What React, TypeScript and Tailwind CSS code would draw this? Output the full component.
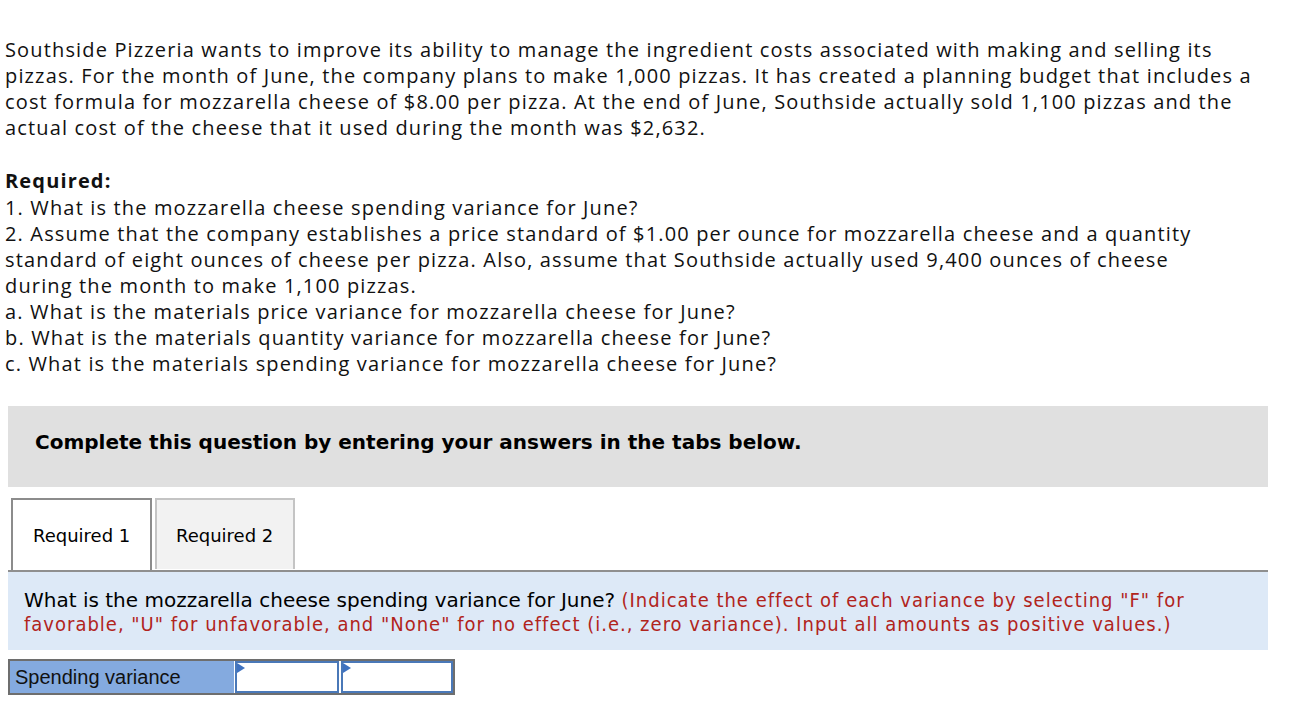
export default function App() {
  return (
    <div className="min-h-screen bg-white pt-[37px]">
      {/* problem text */}
      <div className="whitespace-nowrap pl-[5px] text-[20px] leading-[26px] tracking-[1.15px] text-[#111]" style={{ fontFamily: '"Open Sans", Arial, sans-serif' }}>
        <p>
          Southside Pizzeria wants to improve its ability to manage the ingredient costs associated with making and selling its<br />
          pizzas. For the month of June, the company plans to make 1,000 pizzas. It has created a planning budget that includes a<br />
          cost formula for mozzarella cheese of $8.00 per pizza. At the end of June, Southside actually sold 1,100 pizzas and the<br />
          actual cost of the cheese that it used during the month was $2,632.
        </p>
        <p className="mt-[27px] font-bold">Required:</p>
        <p className="mt-[1px]">1. What is the mozzarella cheese spending variance for June?</p>
        <p>
          2. Assume that the company establishes a price standard of $1.00 per ounce for mozzarella cheese and a quantity<br />
          standard of eight ounces of cheese per pizza. Also, assume that Southside actually used 9,400 ounces of cheese<br />
          during the month to make 1,100 pizzas.
        </p>
        <p>a. What is the materials price variance for mozzarella cheese for June?</p>
        <p>b. What is the materials quantity variance for mozzarella cheese for June?</p>
        <p>c. What is the materials spending variance for mozzarella cheese for June?</p>
      </div>

      <div className="mx-[8px] w-[1260px]" style={{ fontFamily: '"DejaVu Sans", Verdana, sans-serif' }}>
        {/* instructions bar */}
        <div className="mt-[29px] h-[81px] bg-[#e0e0e0] pl-[27px] pt-[21px] text-[20px] font-bold text-black">
          Complete this question by entering your answers in the tabs below.
        </div>

        {/* tabs */}
        <div className="mt-[11px] flex gap-[3px] pl-[3px]">
          <div className="flex h-[72px] w-[141px] items-center border-2 border-b-0 border-[#8c8c8c] bg-white pl-[20px] text-[18px] text-black">
            Required 1
          </div>
          <div className="flex h-[71px] w-[140px] items-center border-2 border-b-0 border-[#c4c4c4] bg-[#f2f2f2] pl-[19px] pt-[2px] text-[18px] text-black">
            Required 2
          </div>
        </div>

        {/* question panel */}
        <div className="whitespace-nowrap border-t-2 border-[#8f8f8f] bg-[#dde9f7] pl-[16px] pt-[16px] pb-[14px] text-[20px] leading-[24px] text-black">
          What is the mozzarella cheese spending variance for June?{" "}
          <span className="tracking-[1px] text-[#b1241c]" style={{ fontFamily: '"DejaVu Sans Condensed", "DejaVu Sans", sans-serif', fontStretch: 'condensed' }}>
            (Indicate the effect of each variance by selecting "F" for<br />
            favorable, "U" for unfavorable, and "None" for no effect (i.e., zero variance). Input all amounts as positive values.)
          </span>
        </div>

        {/* answer row */}
        <div className="mt-[9px] flex h-[36px] w-[447px] border-2 border-[#6e6e6e]">
          <div className="flex w-[225px] items-center bg-[#84aadf] pl-[5px] text-[20px] text-[#111]" style={{ fontFamily: '"Liberation Sans", Arial, sans-serif' }}>
            Spending variance
          </div>
          <div className="relative ml-[1px] w-[104px] border-2 border-[#4a78b8] bg-white">
            <div className="absolute left-0 top-0 h-0 w-0 border-t-[5px] border-b-[5px] border-l-[8px] border-t-transparent border-b-transparent border-l-[#3f72c0]" />
          </div>
          <div className="relative ml-[2px] w-[113px] border-2 border-[#4a78b8] bg-white">
            <div className="absolute left-0 top-0 h-0 w-0 border-t-[5px] border-b-[5px] border-l-[8px] border-t-transparent border-b-transparent border-l-[#3f72c0]" />
          </div>
        </div>
      </div>
    </div>
  );
}
